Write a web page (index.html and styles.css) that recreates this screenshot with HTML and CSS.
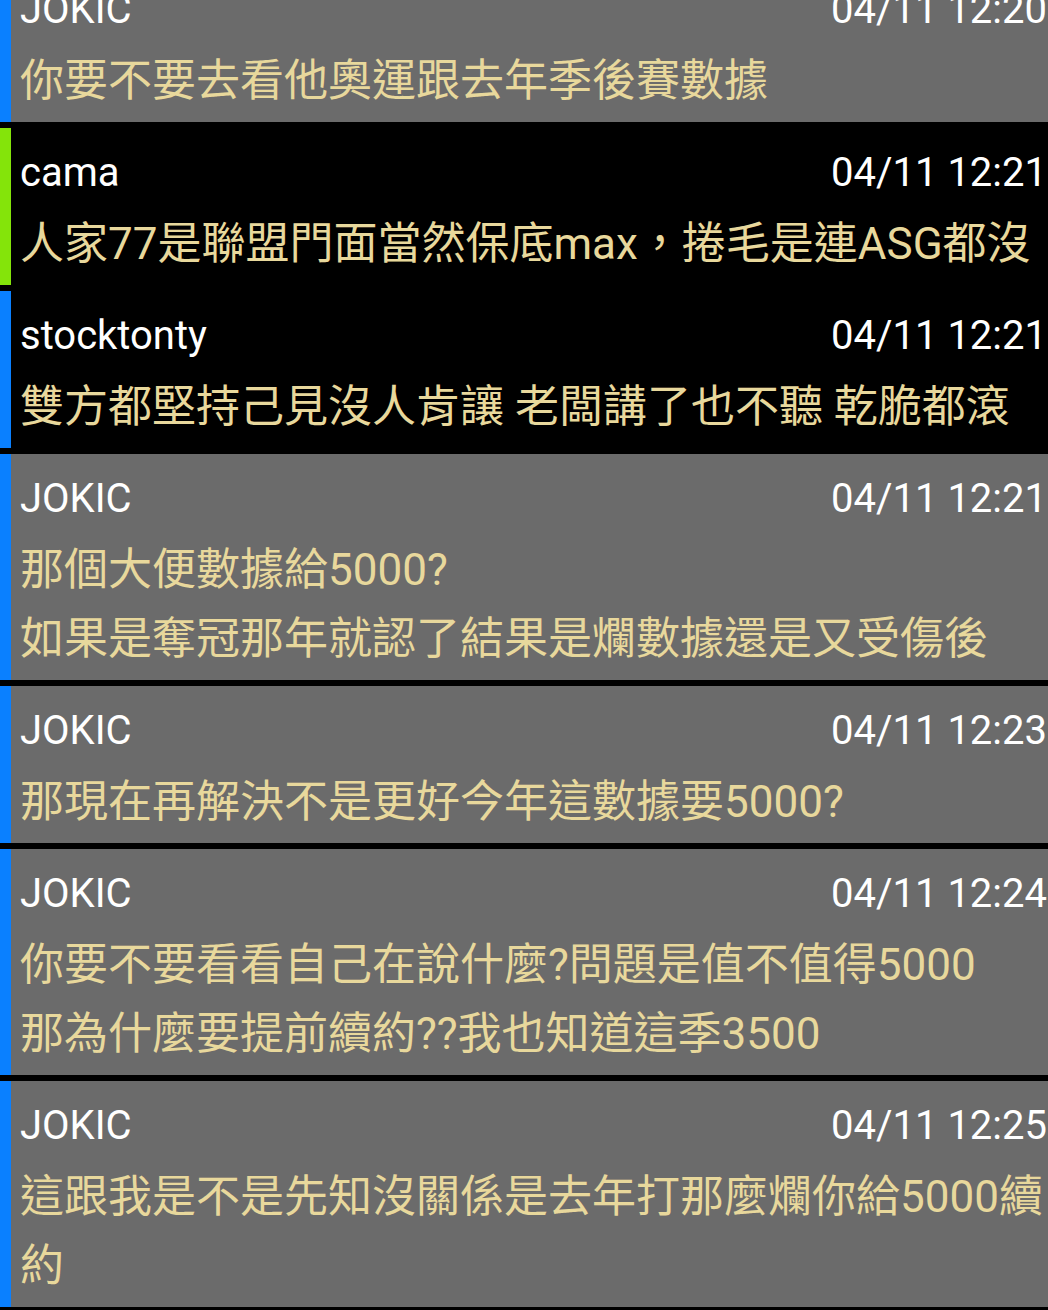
FILE: index.html
```html
<!DOCTYPE html>
<html lang="zh-Hant">
<head>
<meta charset="utf-8">
<title>Messages</title>
<link rel="stylesheet" href="styles.css">
</head>
<body>
<div class="list">
  <div class="msg gray blue">
    <div class="head"><span class="name">JOKIC</span><span class="time">04/11 12:20</span></div>
    <div class="text">你要不要去看他奧運跟去年季後賽數據</div>
  </div>
  <div class="msg dark green">
    <div class="head"><span class="name">cama</span><span class="time">04/11 12:21</span></div>
    <div class="text">人家77是聯盟門面當然保底max，捲毛是連ASG都沒</div>
  </div>
  <div class="msg dark blue">
    <div class="head"><span class="name">stocktonty</span><span class="time">04/11 12:21</span></div>
    <div class="text">雙方都堅持己見沒人肯讓 老闆講了也不聽 乾脆都滾</div>
  </div>
  <div class="msg gray blue">
    <div class="head"><span class="name">JOKIC</span><span class="time">04/11 12:21</span></div>
    <div class="text">那個大便數據給5000?<br>如果是奪冠那年就認了結果是爛數據還是又受傷後</div>
  </div>
  <div class="msg gray blue">
    <div class="head"><span class="name">JOKIC</span><span class="time">04/11 12:23</span></div>
    <div class="text">那現在再解決不是更好今年這數據要5000?</div>
  </div>
  <div class="msg gray blue">
    <div class="head"><span class="name">JOKIC</span><span class="time">04/11 12:24</span></div>
    <div class="text">你要不要看看自己在說什麼?問題是值不值得5000<br>那為什麼要提前續約??我也知道這季3500</div>
  </div>
  <div class="msg gray blue">
    <div class="head"><span class="name">JOKIC</span><span class="time">04/11 12:25</span></div>
    <div class="text">這跟我是不是先知沒關係是去年打那麼爛你給5000續約</div>
  </div>
</div>
</body>
</html>
```

FILE: styles.css
```css
html, body {
  margin: 0;
  padding: 0;
  background: #000;
  overflow: hidden;
}

body {
  width: 1048px;
  height: 1310px;
  font-family: Roboto, "Noto Sans CJK TC", sans-serif;
}

.list {
  display: flex;
  flex-direction: column;
  gap: 6px;
  margin-top: -35px;
}

.msg {
  border-left: 11px solid #0a80ff;
  padding: 21px 0 6px 9px;
}

.msg.gray { background: #6b6b6b; }
.msg.dark { background: #000; }
.msg.blue { border-left-color: #0a80ff; }
.msg.green { border-left-color: #84e40a; }

.head {
  display: flex;
  justify-content: space-between;
  align-items: baseline;
  height: 47px;
  line-height: 47px;
  font-size: 40px;
  color: #fff;
  margin-right: 1px;
  white-space: nowrap;
}

.text {
  margin-top: 14px;
  font-size: 44px;
  line-height: 69px;
  color: #e8d89c;
}
```
